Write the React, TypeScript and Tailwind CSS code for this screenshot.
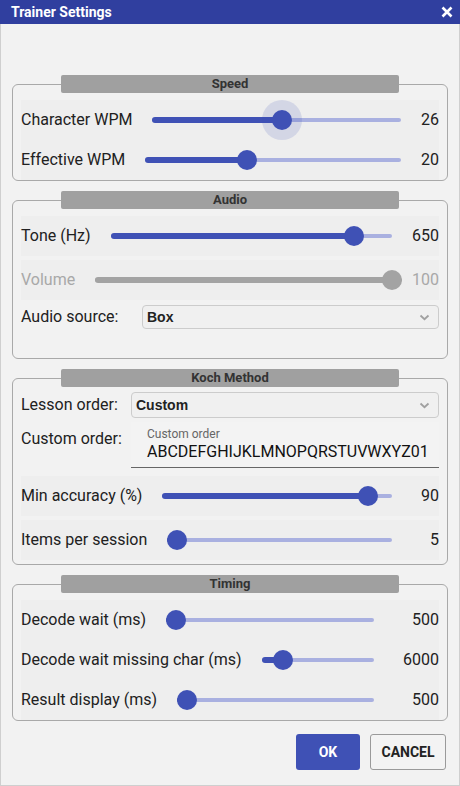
import React from 'react';

const FONT = { fontFamily: 'Roboto, "Liberation Sans", sans-serif' };

interface SliderProps {
  value: number; // 0..1
  disabled?: boolean;
  halo?: boolean;
}

function Slider({ value, disabled, halo }: SliderProps) {
  const pos = `calc(${value} * (100% - 20px) + 10px)`;
  return (
    <div className="relative h-[20px] flex-1">
      <div
        className={`absolute left-0 right-0 top-1/2 h-[4px] -translate-y-1/2 rounded-full ${
          disabled ? 'bg-[#a3a3a3]' : 'bg-[#a9b0e0]'
        }`}
      />
      <div
        className={`absolute left-0 top-1/2 h-[6px] -translate-y-1/2 rounded-full ${
          disabled ? 'bg-[#a3a3a3]' : 'bg-[#3f51b5]'
        }`}
        style={{ width: pos }}
      />
      {halo && (
        <div
          className="absolute top-1/2 h-[40px] w-[40px] -translate-x-1/2 -translate-y-1/2 rounded-full bg-[#3f51b5]/15"
          style={{ left: pos }}
        />
      )}
      <div
        className={`absolute top-1/2 h-[20px] w-[20px] -translate-x-1/2 -translate-y-1/2 rounded-full ${
          disabled ? 'bg-[#a3a3a3]' : 'bg-[#3f51b5]'
        }`}
        style={{ left: pos }}
      />
    </div>
  );
}

interface SliderRowProps {
  label: string;
  value: number;
  display: string;
  valueWidth: string;
  disabled?: boolean;
  halo?: boolean;
}

function SliderRow({ label, value, display, valueWidth, disabled, halo }: SliderRowProps) {
  return (
    <div className="flex h-[40px] items-center bg-[#eeeeee]">
      <span className={`whitespace-nowrap ${disabled ? 'text-[#a8a8a8]' : 'text-[#212121]'}`}>{label}</span>
      <div className="ml-[20px] flex flex-1 items-center">
        <Slider value={value} disabled={disabled} halo={halo} />
      </div>
      <span className={`${valueWidth} text-right ${disabled ? 'text-[#a8a8a8]' : 'text-[#212121]'}`}>
        {display}
      </span>
    </div>
  );
}

function Group({ title, children, className }: { title: string; children: React.ReactNode; className: string }) {
  return (
    <div className="mx-[11px] flex flex-col">
      <div className="relative z-10 mx-auto flex h-[18px] w-[338px] items-center justify-center rounded-[2px] bg-[#a0a0a0] text-[13px] font-bold text-[#333333]">
        {title}
      </div>
      <div className={`-mt-[9px] rounded-[6px] border border-[#a9a9a9] px-[8px] ${className}`}>{children}</div>
    </div>
  );
}

function Combo({ text }: { text: string }) {
  return (
    <div className="flex h-full flex-1 items-center justify-between rounded-[4px] border border-[#cccccc] bg-[#f0f0f0] pl-[4px] pr-[8px]">
      <span className="text-[14px] font-bold text-[#222222]" style={{ fontFamily: '"Liberation Sans", Arial, sans-serif' }}>
        {text}
      </span>
      <svg width="11" height="7" viewBox="0 0 11 7" fill="none">
        <path d="M1.5 1.5 L5.5 5.2 L9.5 1.5" stroke="#a0a0a0" strokeWidth="1.8" />
      </svg>
    </div>
  );
}

export default function App() {
  return (
    <div className="flex h-[786px] w-[460px] flex-col bg-[#f2f2f2] text-[16px]" style={FONT}>
      {/* Title bar */}
      <div className="flex h-[24px] shrink-0 items-center justify-between bg-[#303f9f] pl-[11px] pr-[7px]">
        <span className="text-[14px] font-bold text-white">Trainer Settings</span>
        <svg width="12" height="12" viewBox="0 0 12 12">
          <path d="M1.5 1.5 L10.5 10.5 M10.5 1.5 L1.5 10.5" stroke="white" strokeWidth="2.6" />
        </svg>
      </div>

      <div className="flex flex-1 flex-col border-x border-b border-[#cfcfcf] pt-[51px]">
        {/* Speed */}
        <Group title="Speed" className="pt-[15px]">
          <SliderRow label="Character WPM" value={0.524} display="26" valueWidth="w-[38px]" halo />
          <SliderRow label="Effective WPM" value={0.39} display="20" valueWidth="w-[38px]" />
        </Group>

        {/* Audio */}
        <div className="mt-[10px]">
          <Group title="Audio" className="pt-[15px] pb-[29px]">
            <SliderRow label="Tone (Hz)" value={0.893} display="650" valueWidth="w-[47px]" />
            <div className="mt-[4px]">
              <SliderRow label="Volume" value={1} display="100" valueWidth="w-[37px]" disabled />
            </div>
            <div className="mt-[5px] flex h-[24px] items-center">
              <span className="w-[121px] text-[#212121]">Audio source:</span>
              <Combo text="Box" />
            </div>
          </Group>
        </div>

        {/* Koch Method */}
        <div className="mt-[10px]">
          <Group title="Koch Method" className="pt-[13px] pb-[4px]">
            <div className="flex h-[26px] items-center">
              <span className="w-[110px] text-[#212121]">Lesson order:</span>
              <Combo text="Custom" />
            </div>
            <div className="mt-[4px] flex h-[46px]">
              <span className="w-[110px] pt-[5px] text-[#212121]">Custom order:</span>
              <div className="flex flex-1 flex-col border-b border-[#666666] bg-[#f3f3f3] pl-[16px] pt-[5px]">
                <span className="text-[12px] leading-[15px] text-[#666666]">Custom order</span>
                <span className="text-[16px] leading-[20px] text-[#111111]">ABCDEFGHIJKLMNOPQRSTUVWXYZ01</span>
              </div>
            </div>
            <div className="mt-[8px]">
              <SliderRow label="Min accuracy (%)" value={0.933} display="90" valueWidth="w-[47px]" />
            </div>
            <div className="mt-[4px]">
              <SliderRow label="Items per session" value={0} display="5" valueWidth="w-[47px]" />
            </div>
          </Group>
        </div>

        {/* Timing */}
        <div className="mt-[10px]">
          <Group title="Timing" className="pt-[15px]">
            <SliderRow label="Decode wait (ms)" value={0} display="500" valueWidth="w-[65px]" />
            <SliderRow label="Decode wait missing char (ms)" value={0.126} display="6000" valueWidth="w-[65px]" />
            <SliderRow label="Result display (ms)" value={0} display="500" valueWidth="w-[65px]" />
          </Group>
        </div>

        {/* Buttons */}
        <div className="mt-[13px] flex justify-end gap-[10px] pr-[13px]">
          <button className="h-[36px] w-[64px] rounded-[3px] bg-[#3f51b5] text-[14px] font-bold text-white">OK</button>
          <button className="h-[36px] w-[76px] rounded-[3px] border border-[#9a9a9a] bg-[#f3f3f3] text-[14px] font-bold text-[#222222]">
            CANCEL
          </button>
        </div>
      </div>
    </div>
  );
}
